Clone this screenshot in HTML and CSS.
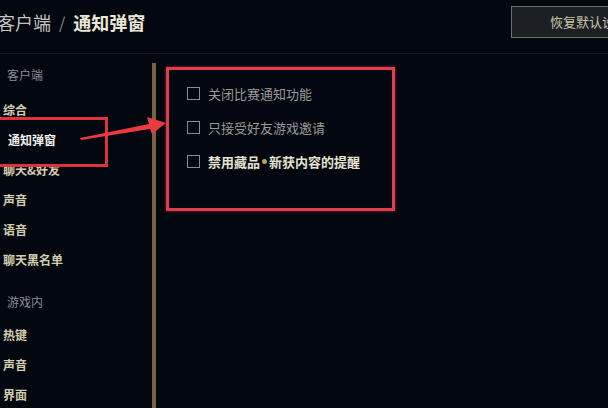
FILE: index.html
```html
<!DOCTYPE html>
<html lang="zh-CN">
<head>
    <meta charset="UTF-8">
    <meta name="viewport" content="width=device-width, initial-scale=1.0">
    <title>客户端 / 通知弹窗</title>
    <link rel="stylesheet" href="styles.css">
</head>
<body>
    <header class="header">
        <h1 class="title"><span class="crumb">客户端</span><span class="sep">/</span><span class="current">通知弹窗</span></h1>
        <button class="reset-button">恢复默认设置</button>
    </header>
    <div class="main">
        <nav class="sidebar">
            <div class="group-label">客户端</div>
            <div class="nav-item">综合</div>
            <div class="nav-item active">通知弹窗</div>
            <div class="nav-item">聊天&amp;好友</div>
            <div class="nav-item">声音</div>
            <div class="nav-item">语音</div>
            <div class="nav-item">聊天黑名单</div>
            <div class="group-label second">游戏内</div>
            <div class="nav-item first">热键</div>
            <div class="nav-item">声音</div>
            <div class="nav-item">界面</div>
        </nav>
        <section class="content">
            <div class="options">
                <label class="option"><span class="box"></span>关闭比赛通知功能</label>
                <label class="option"><span class="box"></span>只接受好友游戏邀请</label>
                <label class="option strong"><span class="box"></span>禁用藏品<span class="dot"></span>新获内容的提醒</label>
            </div>
        </section>
    </div>
    <div class="mark-box"></div>
    <svg class="mark-arrow" width="100" height="40" viewBox="0 0 100 40">
        <polygon points="0,33 69,19 67,12 86,18 72,29 70,24 1,35" fill="#ec3a42"/>
    </svg>
</body>
</html>
```
FILE: styles.css
```css
body {
    margin: 0;
    padding: 0;
    width: 608px;
    height: 408px;
    overflow: hidden;
    background-color: #03070f;
    font-family: "Noto Sans CJK SC", "Noto Sans", sans-serif;
    color: #d6d0b4;
    position: relative;
}

.header {
    height: 53px;
    display: flex;
    align-items: center;
    justify-content: space-between;
    border-bottom: 1px solid #181d25;
}

.title {
    margin: 0 0 10px -3px;
    font-size: 18px;
    font-weight: normal;
    display: flex;
    align-items: center;
    gap: 8px;
}

.title .crumb {
    color: #c4c4c0;
}

.title .sep {
    color: #8a8a86;
    font-size: 16px;
}

.title .current {
    color: #ebe7d8;
    font-weight: bold;
}

.reset-button {
    width: 136px;
    height: 32px;
    margin: 0 -39px 10px 0;
    padding: 0 0 0 38px;
    text-align: left;
    background-color: #1c1f23;
    border: 1px solid #707070;
    color: #cac4aa;
    font-family: inherit;
    font-size: 13px;
}

.main {
    display: flex;
    padding-top: 9px;
    height: 345px;
}

.sidebar {
    width: 152px;
    border-right: 4px solid #7a6242;
    flex-shrink: 0;
}

.group-label {
    height: 24px;
    line-height: 24px;
    padding-left: 7px;
    font-size: 12px;
    color: #8a8d92;
    margin-bottom: 8px;
}

.group-label.second {
    margin-top: 15px;
    margin-bottom: 6px;
}

.nav-item {
    height: 30px;
    line-height: 30px;
    padding-left: 3px;
    font-size: 12px;
    font-weight: bold;
    color: #d4ceb0;
}

.nav-item.active {
    padding-left: 8px;
    color: #f2f2ee;
}

.content {
    flex: 1;
    padding: 4px 0 0 10px;
}

.options {
    width: 223px;
    height: 125px;
    border: 3px solid #df3f4c;
    box-shadow: 0 0 3px rgba(230, 60, 80, 0.6);
    padding-top: 13px;
    box-sizing: content-box;
    display: flex;
    flex-direction: column;
    gap: 14px;
}

.option {
    display: flex;
    align-items: center;
    height: 20px;
    padding-left: 18px;
    font-size: 13px;
    color: #9a9a98;
}

.option.strong {
    color: #e6e2d2;
    font-weight: bold;
}

.box {
    width: 11px;
    height: 11px;
    border: 1px solid #8c8c8c;
    margin-right: 8px;
    flex-shrink: 0;
}

.dot {
    width: 5px;
    height: 5px;
    border-radius: 50%;
    background-color: #b9a24e;
    margin: 0 2px;
}

.mark-box {
    position: absolute;
    left: -3px;
    top: 117px;
    width: 105px;
    height: 44px;
    border: 3px solid #e0323c;
}

.mark-arrow {
    position: absolute;
    left: 80px;
    top: 105px;
}
```
